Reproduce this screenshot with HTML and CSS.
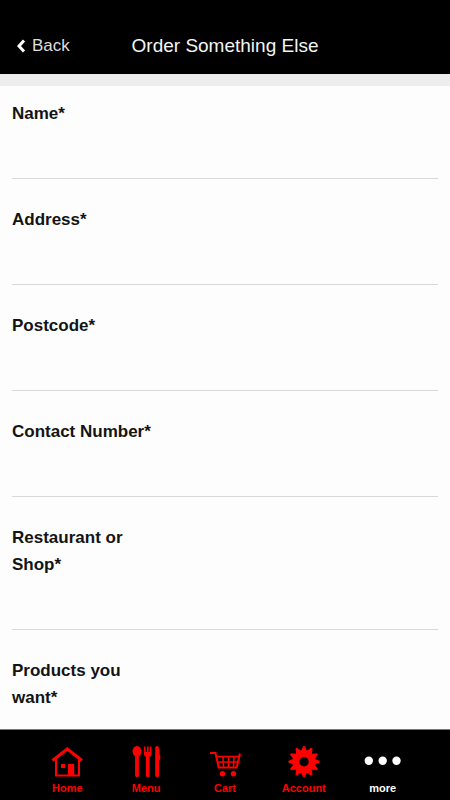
FILE: index.html
```html
<!DOCTYPE html>
<html lang="en">
<head>
<meta charset="utf-8">
<meta name="viewport" content="width=device-width, initial-scale=1">
<title>Order Something Else</title>
<link rel="stylesheet" href="styles.css">
</head>
<body>
<header class="topbar">
  <a class="back" href="#">
    <svg class="chevron" viewBox="0 0 10 14" aria-hidden="true"><path d="M8 1.500 3 7l5 5.500"/></svg>
    Back
  </a>
  <h1 class="title">Order Something Else</h1>
</header>
<main class="content">
  <form class="form">
    <div class="field"><label class="label" for="name">Name*</label><input class="input" id="name" type="text"></div>
    <div class="field"><label class="label" for="address">Address*</label><input class="input" id="address" type="text"></div>
    <div class="field"><label class="label" for="postcode">Postcode*</label><input class="input" id="postcode" type="text"></div>
    <div class="field"><label class="label" for="contact">Contact Number*</label><input class="input" id="contact" type="tel"></div>
    <div class="field"><label class="label" for="shop">Restaurant or<br>Shop*</label><input class="input" id="shop" type="text"></div>
    <div class="field"><label class="label" for="products">Products you<br>want*</label><input class="input" id="products" type="text"></div>
  </form>
</main>
<nav class="tabs">
  <a class="tab" href="#">
    <svg class="icon" viewBox="0 0 34 34" aria-hidden="true">
      <path class="roof" d="M2.500 15.500 17.300 4l14.700 11.500"/>
      <path class="wall" d="M6 14v16.500h23V14"/>
      <path d="M11 19h4v4h-4zM18 19h6.200v12H18z"/>
    </svg>
    Home
  </a>
  <a class="tab" href="#">
    <svg class="icon" viewBox="0 0 34 34" aria-hidden="true">
      <path d="M8 1c2.800 0 4.300 2.800 4.300 5.500 0 2.300-1 3.900-2.400 4.700V30.500c0 2.200-3.800 2.200-3.800 0V11.200C4.700 10.400 3.600 8.800 3.600 6.500 3.600 3.800 5.200 1 8 1z"/>
      <path d="M15 1.500h1.500V7h1.400V1.500h1.700V7H21V1.500h1.500V9c0 1.500-.8 2.400-1.900 2.900v18.600c0 2.200-3.700 2.200-3.700 0V11.900C15.800 11.400 15 10.500 15 9z"/>
      <path d="M26.200 3c0-2.700 3.400-2.700 3.900 0l.6 7c1.200 1.500.9 4.500-.6 5.500v15c0 2.200-3.900 2.200-3.900 0z"/>
    </svg>
    Menu
  </a>
  <a class="tab" href="#">
    <svg class="icon" viewBox="0 0 34 34" aria-hidden="true">
      <path class="wall" d="M2 8h5.500l3.200 14.500h18L32 8.500"/>
      <path class="thin" d="M8.500 11.500H31M9.500 17H30M15 11.500l.5 11M20.500 11.500v11M26 11.500l-.5 11"/>
      <circle cx="14.500" cy="28.800" r="2.700"/><circle cx="25.500" cy="28.800" r="2.700"/>
    </svg>
    Cart
  </a>
  <a class="tab" href="#">
    <svg class="icon" viewBox="0 0 34 34" aria-hidden="true">
      <circle class="ring" cx="17" cy="16.700" r="8.200"/>
      <g transform="translate(17 16.700)">
        <path id="teeth" d="M-2.800-10.500-1.200-15Q0-16.500 1.200-15L2.800-10.500zM-2.800 10.500-1.200 15Q0 16.500 1.200 15L2.800 10.500zM-10.500-2.800-15-1.200Q-16.500 0-15 1.200L-10.500 2.800zM10.500-2.800 15-1.200Q16.500 0 15 1.200L10.500 2.800z"/>
        <use href="#teeth" transform="rotate(30)"/>
        <use href="#teeth" transform="rotate(60)"/>
      </g>
    </svg>
    Account
  </a>
  <a class="tab tab-more" href="#">
    <svg class="icon" viewBox="0 0 34 34" aria-hidden="true">
      <circle cx="2.800" cy="15.800" r="4.200"/><circle cx="16.700" cy="15.800" r="4.200"/><circle cx="30.500" cy="15.800" r="4.200"/>
    </svg>
    more
  </a>
</nav>
</body>
</html>
```
FILE: styles.css
```css
* { box-sizing: border-box; }

body {
  margin: 0;
  height: 100vh;
  display: flex;
  flex-direction: column;
  background: #fdfdfd;
  color: #141414;
  font-family: "Liberation Sans", Arial, sans-serif;
}

a { color: inherit; text-decoration: none; }

.topbar {
  flex: none;
  display: grid;
  grid-template-columns: 1fr auto 1fr;
  align-items: center;
  padding: 32px 16px 14px;
  background: #000;
  color: #f4f4f4;
}

.back {
  display: flex;
  align-items: center;
  gap: 6px;
  font-size: 17px;
  line-height: 28px;
  color: #ddd;
}

.chevron {
  width: 10px;
  height: 14px;
  fill: none;
  stroke: #fff;
  stroke-width: 3;
}

.title {
  margin: 0;
  font-size: 19px;
  font-weight: 400;
  line-height: 28px;
}

.content {
  flex: 1;
  min-height: 0;
  overflow-y: auto;
  scrollbar-width: none;
  border-top: 12px solid #ededed;
}

.form { padding: 0 12px; }

.field {
  display: flex;
  flex-direction: column;
  align-items: flex-start;
  padding-top: 27px;
}

.field:first-child { padding-top: 14px; }

.label {
  font-size: 17px;
  font-weight: 700;
  line-height: 27px;
}

.input {
  width: 100%;
  height: 52px;
  padding: 0;
  border: 0;
  border-bottom: 1px solid #d8d8d8;
  border-radius: 0;
  background: transparent;
  font: inherit;
  outline: none;
}

.tabs {
  flex: none;
  display: grid;
  grid-template-columns: repeat(5, 1fr);
  padding: 15px 28px 5px;
  border-top: 1px solid #777;
  background: #000;
  color: #f00;
}

.tab {
  display: flex;
  flex-direction: column;
  align-items: center;
  gap: 2px;
  font-size: 11px;
  font-weight: 700;
  line-height: 14px;
}

.tab-more { color: #fff; }

.icon {
  width: 34px;
  height: 34px;
  overflow: visible;
  fill: currentColor;
  stroke: none;
}

.roof { fill: none; stroke: currentColor; stroke-width: 3; }
.wall { fill: none; stroke: currentColor; stroke-width: 2; }
.thin { fill: none; stroke: currentColor; stroke-width: 1.5; }
.ring { fill: none; stroke: currentColor; stroke-width: 7; }
```
